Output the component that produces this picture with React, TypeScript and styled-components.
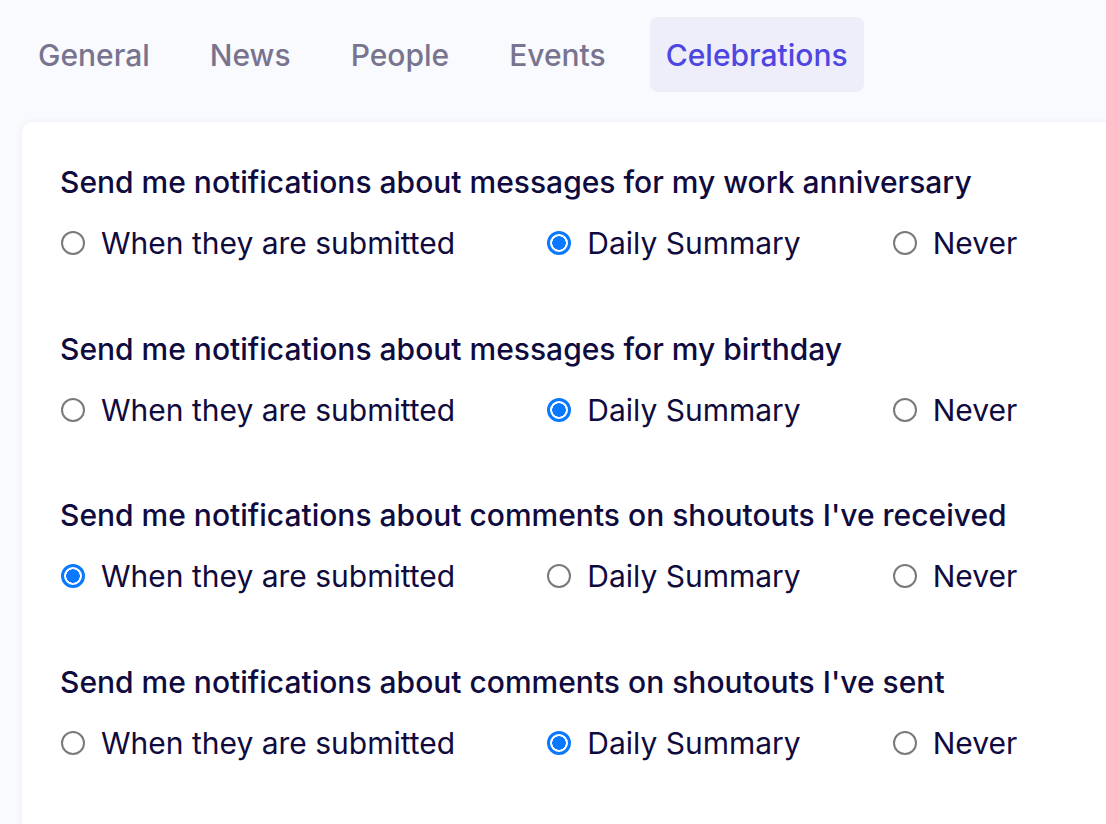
import styled, { createGlobalStyle } from 'styled-components'

type Choice = 'submitted' | 'daily' | 'never'

type Question = {
    title: string
    value: Choice
}

const questions: Question[] = [
    { title: 'Send me notifications about messages for my work anniversary', value: 'daily' },
    { title: 'Send me notifications about messages for my birthday', value: 'daily' },
    { title: "Send me notifications about comments on shoutouts I've received", value: 'submitted' },
    { title: "Send me notifications about comments on shoutouts I've sent", value: 'daily' },
]

const options: { key: Choice, label: string }[] = [
    { key: 'submitted', label: 'When they are submitted' },
    { key: 'daily', label: 'Daily Summary' },
    { key: 'never', label: 'Never' },
]

const tabs = ['General', 'News', 'People', 'Events', 'Celebrations']

const App = () => {
    return (
        <>
            <GlobalStyle />
            <Page>
                <TabBar>
                    {tabs.map(t => (
                        <Tab key={t} active={t === 'Celebrations'}>{t}</Tab>
                    ))}
                </TabBar>

                <Card>
                    {questions.map((q, i) => (
                        <Section key={i}>
                            <Title>{q.title}</Title>
                            <OptionRow>
                                {options.map(o => (
                                    <Option key={o.key}>
                                        <Radio
                                            type='radio'
                                            name={`q${i}`}
                                            defaultChecked={o.key === q.value}
                                        />
                                        <span>{o.label}</span>
                                    </Option>
                                ))}
                            </OptionRow>
                        </Section>
                    ))}
                </Card>
            </Page>
        </>
    )
}

const GlobalStyle = createGlobalStyle`
    html, body {
        margin: 0;
        background: #f9fafe;
        overflow: hidden;
    }
    * {
        box-sizing: border-box;
    }
`;

const Page = styled.div`
    min-height: 824px;
    padding: 17px 0 0 22px;
    font-family: Inter, "Noto Sans", sans-serif;
    color: #0f0b3e;
`;

const TabBar = styled.div`
    display: flex;
    gap: 28px;
`;

const Tab = styled.div<{ active?: boolean }>`
    padding: 21px 16px 19px;
    font-size: 30px;
    line-height: 35px;
    font-weight: 500;
    border-radius: 8px;
    color: ${props => props.active ? '#4f45e0' : '#78748f'};
    background-color: ${props => props.active ? '#eeedfa' : 'transparent'};
    cursor: pointer;
`;

const Card = styled.div`
    margin-top: 30px;
    background-color: #fff;
    border-radius: 10px 0 0 0;
    box-shadow: 0 0 6px rgba(20, 20, 80, 0.06);
    padding: 42px 0 60px 38px;
    min-height: 720px;
`;

const Section = styled.div`
    margin-bottom: 69.5px;
`;

const Title = styled.div`
    font-size: 30px;
    line-height: 36px;
    font-weight: 500;
    margin-bottom: 25px;
`;

const OptionRow = styled.div`
    display: flex;
    gap: 91px;
`;

const Option = styled.label`
    display: flex;
    align-items: center;
    gap: 16px;
    font-size: 30px;
    line-height: 36px;
    cursor: pointer;
`;

const Radio = styled.input`
    appearance: none;
    margin: 0 0 0 1px;
    width: 24px;
    height: 24px;
    border-radius: 50%;
    border: 2px solid #7a7a7a;
    background: #fff;
    cursor: pointer;

    &:checked {
        border: 3px solid #0b79ff;
        background: radial-gradient(circle, #0b79ff 0 6.5px, #fff 7px);
    }
`;

export default App
